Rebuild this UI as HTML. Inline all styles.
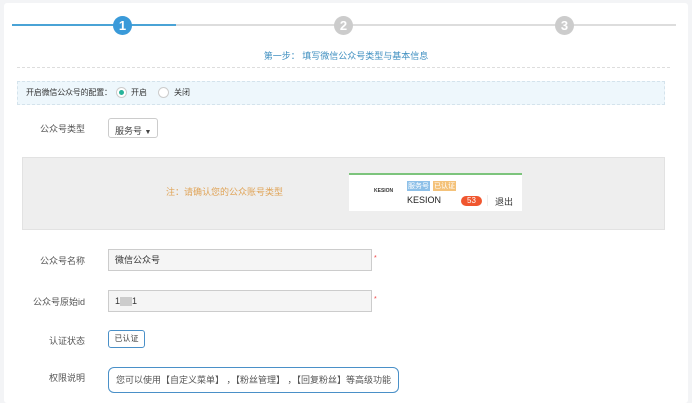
<!DOCTYPE html>
<html><head><meta charset="utf-8"><style>
*{margin:0;padding:0;box-sizing:border-box}
body{width:692px;height:400px;background:#f3f4f6;font-family:"Liberation Sans","Noto Sans CJK SC",sans-serif;font-size:9px;color:#555;position:relative;overflow:hidden}
.card{position:absolute;left:4px;top:3px;width:684px;height:400px;background:#fff;border-radius:3px}
.abs{position:absolute}
.circ{position:absolute;width:19px;height:19px;border-radius:50%;color:#fff;font-weight:bold;font-size:13px;text-align:center;line-height:19px;top:16px}
.lab{position:absolute;width:85px;text-align:right;font-size:9px;color:#555}
.inp{position:absolute;border:1px solid #ccc;background:#f5f5f5;font-size:9px;color:#333;padding-left:6px}
</style></head><body>
<div class="card"></div>
<div class="abs" style="left:12px;top:24px;width:664px;height:2px;background:#ddd"></div>
<div class="abs" style="left:12px;top:24px;width:164px;height:2px;background:#4aa3d6"></div>
<div class="circ" style="left:113px;background:#3a9ad9">1</div>
<div class="circ" style="left:334px;background:#ccc">2</div>
<div class="circ" style="left:555px;background:#ccc">3</div>
<div class="abs" style="left:0;width:692px;top:49px;text-align:center;color:#3f8fc0;font-size:9px">第一步： 填写微信公众号类型与基本信息</div>
<div class="abs" style="left:17px;top:67px;width:653px;border-top:1px dashed #ddd"></div>
<div class="abs" style="left:17px;top:81px;width:648px;height:24px;background:#eef7fc;border:1px dashed #d4e3ec"></div>
<div class="abs" style="left:26px;top:87px;font-size:8px;color:#333;letter-spacing:-0.2px">开启微信公众号的配置：</div>
<div class="abs" style="left:116px;top:87px;width:11px;height:11px;border:1px solid #ccc;border-radius:50%;background:#fff"><div style="width:5px;height:5px;border-radius:50%;background:#27b39a;margin:2px"></div></div>
<div class="abs" style="left:131px;top:87px;font-size:8px;color:#333">开启</div>
<div class="abs" style="left:158px;top:87px;width:11px;height:11px;border:1px solid #ccc;border-radius:50%;background:#fff"></div>
<div class="abs" style="left:174px;top:87px;font-size:8px;color:#333">关闭</div>
<div class="lab" style="top:122px">公众号类型</div>
<div class="abs" style="left:108px;top:118px;width:50px;height:20px;border:1px solid #ccc;border-radius:3px;font-size:9px;color:#444;padding:5px 0 0 6px">服务号 <span style="font-size:7px">▼</span></div>
<div class="abs" style="left:22px;top:157px;width:643px;height:73px;background:#eeeeee;border:1px solid #e2e2e2"></div>
<div class="abs" style="left:166px;top:185px;color:#e0a458;font-size:9px">注：请确认您的公众账号类型</div>
<div class="abs" style="left:349px;top:173px;width:173px;height:38px;background:#fff;border-top:2px solid #7cc47c"></div>
<div class="abs" style="left:374px;top:188px;font-size:5px;font-weight:bold;color:#333">KESION</div>
<div class="abs" style="left:407px;top:181px;font-size:7px;color:#fff;background:#8ec0e8;padding:0 1px">服务号</div>
<div class="abs" style="left:433px;top:181px;font-size:7px;color:#fff;background:#f4c27a;padding:0 1px">已认证</div>
<div class="abs" style="left:407px;top:195px;font-size:9px;color:#222">KESION</div>
<div class="abs" style="left:461px;top:196px;width:21px;height:10px;border-radius:5px;background:#f0562f;color:#fff;font-size:8px;text-align:center;line-height:10px">53</div>
<div class="abs" style="left:487px;top:195px;width:1px;height:11px;background:#eee"></div>
<div class="abs" style="left:495px;top:195px;font-size:9px;color:#333">退出</div>
<div class="lab" style="top:254px">公众号名称</div>
<div class="inp" style="left:108px;top:249px;width:264px;height:22px;line-height:20px">微信公众号</div>
<div class="abs" style="left:374px;top:255px;color:#e44;font-size:7px">*</div>
<div class="lab" style="top:295px">公众号原始id</div>
<div class="inp" style="left:108px;top:290px;width:264px;height:22px;line-height:20px">1<span style="display:inline-block;width:12px;height:9px;background:#ccc;vertical-align:middle"></span>1</div>
<div class="abs" style="left:374px;top:296px;color:#e44;font-size:7px">*</div>
<div class="lab" style="top:334px">认证状态</div>
<div class="abs" style="left:108px;top:330px;width:37px;height:18px;border:1px solid #4a90c8;border-radius:3px;font-size:8px;color:#444;text-align:center;line-height:16px">已认证</div>
<div class="lab" style="top:371px">权限说明</div>
<div class="abs" style="left:108px;top:367px;width:291px;height:26px;border:1px solid #4a90c8;border-radius:6px;font-size:9px;color:#555;line-height:24px;padding-left:7px;white-space:nowrap">您可以使用【自定义菜单】&nbsp;，【粉丝管理】&nbsp;，【回复粉丝】等高级功能</div>
</body></html>
